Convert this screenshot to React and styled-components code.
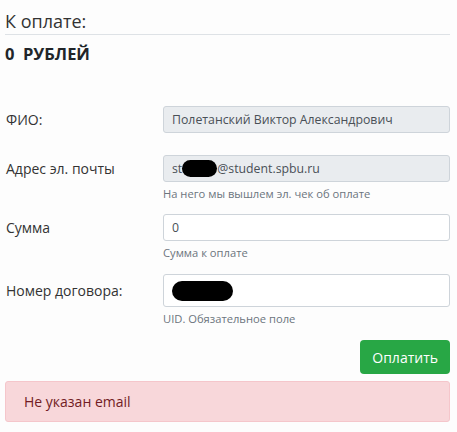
import React from 'react'
import styled, { createGlobalStyle } from 'styled-components'

const Global = createGlobalStyle`
    body {
        margin: 0;
        background: #fdfdfd;
        font-family: "Open Sans", "Noto Sans", sans-serif;
        color: #333;
    }
`

const Page = styled.div`
    width: 445px;
    padding: 9px 7px 10px 5px;
`

const Heading = styled.div`
    font-size: 18px;
    line-height: 24px;
    padding-bottom: 1px;
    border-bottom: 1px solid #dee2e6;
`

const Total = styled.div`
    font-size: 16.5px;
    font-weight: 700;
    line-height: 20px;
    margin-top: 9px;
    white-space: pre;
    color: #212529;
`

const Form = styled.form`
    margin-top: 42px;
    display: flex;
    flex-direction: column;
`

const Row = styled.div`
    display: grid;
    grid-template-columns: 158px 1fr;
    margin-bottom: ${p => p.gap || 13}px;
`

const Label = styled.label`
    grid-column: 1;
    grid-row: 1;
    align-self: center;
    font-size: 14px;
    padding-left: 1px;
    color: #333;
`

const Field = styled.div`
    grid-column: 2;
    height: ${p => p.tall ? 33 : 27}px;
    box-sizing: border-box;
    border: 1px solid #ced4da;
    border-radius: 3px;
    background: ${p => p.disabled ? '#e9ecef' : '#fff'};
    padding: 0 8px;
    display: flex;
    align-items: center;
    font-size: 12.3px;
    color: #495057;
`

const Help = styled.small`
    grid-column: 2;
    margin-top: 4px;
    font-size: 11.2px;
    line-height: 16px;
    color: #6c757d;
`

const Blot = styled.span`
    display: inline-block;
    width: ${p => p.w}px;
    height: ${p => p.h}px;
    background: #000;
    border-radius: ${p => p.h / 2}px;
`

const Actions = styled.div`
    display: flex;
    justify-content: flex-end;
`

const Button = styled.button`
    height: 34px;
    padding: 0 12px;
    border: none;
    border-radius: 4px;
    background: #28a745;
    color: #fff;
    font-family: inherit;
    font-size: 14px;
    cursor: pointer;
`

const Alert = styled.div`
    margin-top: 7px;
    height: 41px;
    box-sizing: border-box;
    display: flex;
    align-items: center;
    padding: 0 18px;
    background: #f8d7da;
    border: 1px solid #f5c6cb;
    border-radius: 3px;
    color: #721c24;
    font-size: 14px;
`

const App = () => {
    return (
        <Page>
            <Global />
            <Heading>К оплате:</Heading>
            <Total>0  РУБЛЕЙ</Total>
            <Form onSubmit={e => e.preventDefault()}>
                <Row gap={22}>
                    <Label>ФИО:</Label>
                    <Field disabled>Полетанский Виктор Александрович</Field>
                </Row>
                <Row gap={12}>
                    <Label>Адрес эл. почты</Label>
                    <Field disabled>st<Blot w={35} h={17} />@student.spbu.ru</Field>
                    <Help>На него мы вышлем эл. чек об оплате</Help>
                </Row>
                <Row>
                    <Label>Сумма</Label>
                    <Field>0</Field>
                    <Help>Сумма к оплате</Help>
                </Row>
                <Row>
                    <Label>Номер договора:</Label>
                    <Field tall><Blot w={61} h={20} /></Field>
                    <Help>UID. Обязательное поле</Help>
                </Row>
                <Actions>
                    <Button type="submit">Оплатить</Button>
                </Actions>
                <Alert>Не указан email</Alert>
            </Form>
        </Page>
    )
}

export default App
